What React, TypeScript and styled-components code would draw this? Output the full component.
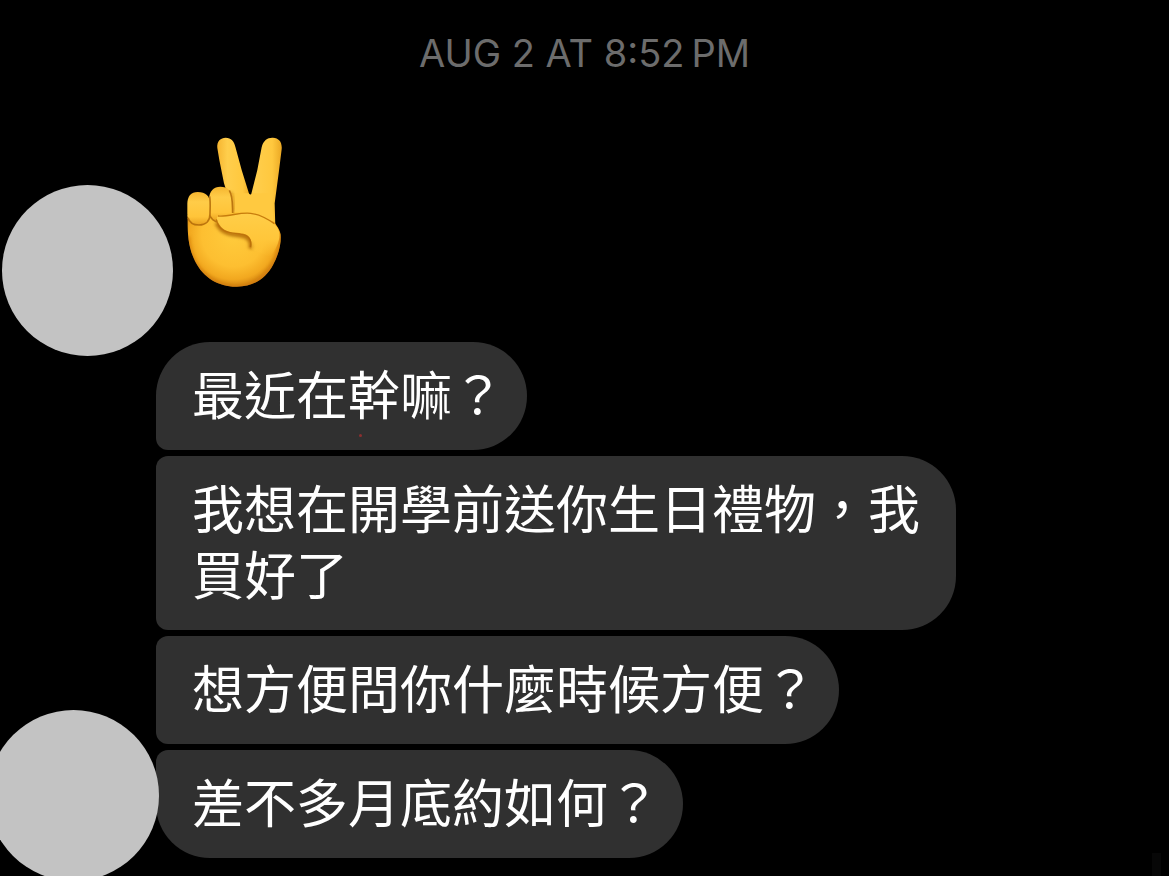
import React from "react";
import styled, { createGlobalStyle } from "styled-components";

const GlobalStyle = createGlobalStyle`
  html, body, #root { height: 100%; }
  body { margin: 0; background: #000; overflow: hidden; }
  * { box-sizing: border-box; }
`;

const Thread = styled.main`
  position: relative;
  min-height: 100%;
  overflow: hidden;
  background: #000;
  color: #fff;
  font-family: Inter, "Noto Sans CJK TC", sans-serif;
`;

const Timestamp = styled.time`
  display: block;
  padding-top: 29px;
  text-align: center;
  font-size: 38px;
  line-height: 48px;
  color: #6c6c6c;
`;

const Messages = styled.ol`
  display: flex;
  flex-direction: column;
  gap: 6px;
  margin: 0;
  padding: 59px 0 18px;
  list-style: none;
`;

const Message = styled.li`
  display: grid;
  grid-template-columns: 156px minmax(0, 1fr);
  align-items: end;
`;

const Avatar = styled.div<{ $shift: number; $drop: number }>`
  z-index: 1;
  grid-column: 1;
  width: 171px;
  height: 171px;
  margin: -80px 0 ${(p) => -p.$drop}px ${(p) => p.$shift}px;
  border-radius: 50%;
  background: #c3c3c3;
`;

const Emoji = styled.svg`
  grid-column: 2;
  width: 96px;
  height: 152px;
  margin: 0 0 48px 30px;
`;

const Bubble = styled.p<{ $first?: boolean; $last?: boolean }>`
  position: relative;
  grid-column: 2;
  justify-self: start;
  max-width: 800px;
  margin: 0;
  padding: 18px 23px 24px 36px;
  border-radius: ${(p) => (p.$first ? 54 : 12)}px 54px 54px ${(p) => (p.$last ? 54 : 12)}px;
  background: #303030;
  font-family: "Noto Sans CJK TC", sans-serif;
  font-size: 52px;
  line-height: 66px;
`;

const RedDot = styled.i`
  position: absolute;
  left: 203px;
  bottom: 13px;
  width: 3px;
  height: 3px;
  border-radius: 50%;
  background: #8c3030;
`;

const ScrollMark = styled.i`
  position: absolute;
  right: 8px;
  bottom: 0;
  width: 9px;
  height: 23px;
  background: #070707;
`;

function VictoryHand() {
  return (
    <Emoji viewBox="48 48 288 456" role="img" aria-label="victory hand">
      <defs>
        <linearGradient id="finger" x1="0" y1="0" x2="1" y2="0">
          <stop offset="0" stopColor="#f6b530" />
          <stop offset="0.3" stopColor="#ffce4c" />
          <stop offset="0.75" stopColor="#ffc83e" />
          <stop offset="1" stopColor="#eba824" />
        </linearGradient>
        <radialGradient id="palm" gradientUnits="userSpaceOnUse" cx="190" cy="345" r="158">
          <stop offset="0" stopColor="#ffcb3c" />
          <stop offset="0.6" stopColor="#fdbf31" />
          <stop offset="0.84" stopColor="#f2a81f" />
          <stop offset="1" stopColor="#d08010" />
        </radialGradient>
        <linearGradient id="curled" x1="0" y1="0" x2="0" y2="1">
          <stop offset="0" stopColor="#f5b52f" />
          <stop offset="0.3" stopColor="#ffcc48" />
          <stop offset="0.75" stopColor="#ffc439" />
          <stop offset="1" stopColor="#e9a11e" />
        </linearGradient>
        <linearGradient id="thumb" x1="0" y1="0" x2="0" y2="1">
          <stop offset="0" stopColor="#ffce48" />
          <stop offset="0.6" stopColor="#ffc63a" />
          <stop offset="1" stopColor="#ffc235" stopOpacity="0" />
        </linearGradient>
        <filter id="soft" x="-20%" y="-20%" width="140%" height="140%">
          <feGaussianBlur stdDeviation="5" />
        </filter>
        <clipPath id="hand">
          <path d="M53 285C52 340 54 382 76 425C100 472 145 500 198 500C252 501 288 474 309 435C328 400 334 365 332 343C330 330 321 318 314 300L300 260L130 260Z" />
        </clipPath>
      </defs>
      <path fill="url(#finger)" d="M142 84C140 63 152 53 167 53C184 53 192 64 196 80L215 150L243 240L230 310H188L178 240L162 190L148 120Z" />
      <path fill="url(#finger)" d="M275 82C280 61 293 52 309 53C327 54 337 66 335 88L326 160L314 250L316 320L220 300L243 225L262 150Z" />
      <path fill="#ffc940" d="M180 220L236 220Q242 227 248 220L300 220L312 310H175Z" />
      <path fill="url(#palm)" d="M53 285C52 340 54 382 76 425C100 472 145 500 198 500C252 501 288 474 309 435C328 400 334 365 332 343C330 330 321 318 312 305L240 280L185 275Z" />
      <g clipPath="url(#hand)">
        <path d="M54 350C58 450 130 500 198 502C270 502 330 430 333 350" fill="none" stroke="#d07a08" strokeWidth="14" opacity="0.6" filter="url(#soft)" />
        <path d="M140 308C155 342 188 344 214 346C235 348 247 362 242 386" fill="none" stroke="#a65c00" strokeWidth="14" opacity="0.75" filter="url(#soft)" />
      </g>
      <path d="M182 216C192 238 190 256 191 278" fill="none" stroke="#c17608" strokeWidth="8" opacity="0.6" filter="url(#soft)" />
      <path fill="url(#curled)" d="M117 239C117 212 132 200 151 200C173 200 187 213 187 239V282L145 304C126 300 117 290 117 273Z" />
      <path fill="url(#curled)" d="M52 252C52 229 63 216 83 216C107 216 120 228 120 251V280C120 303 107 315 87 315C64 315 52 303 52 280Z" />
      <path fill="none" stroke="#b26a08" strokeWidth="5" opacity="0.85" d="M119 229C122 249 120 267 120 282C120 303 107 315 87 315C70 315 58 307 54 293M178 211C189 230 187 252 188 279M120 288C125 298 132 303 140 306" />
      <path fill="url(#thumb)" d="M143 304C136 291 145 284 160 285C190 287 211 277 242 280C272 283 301 299 319 319C338 341 326 380 300 410L244 388C249 361 239 345 218 342C193 338 159 341 143 304Z" />
      <path fill="none" stroke="#c77c0c" strokeWidth="4" d="M144 288C180 290 209 276 242 280C270 283 293 297 313 311" />
      <path fill="none" stroke="#ba6d08" strokeWidth="4" opacity="0.8" d="M139 298C148 341 184 338 212 342C235 344 246 359 241 381" />
    </Emoji>
  );
}

export default function App() {
  return (
    <>
      <GlobalStyle />
      <Thread lang="zh-Hant">
        <Timestamp>AUG 2 AT 8:52{"\u202F"}PM</Timestamp>
        <Messages>
          <Message>
            <Avatar $shift={2} $drop={20} />
            <VictoryHand />
          </Message>
          <Message>
            <Bubble $first>
              最近在幹嘛？
              <RedDot />
            </Bubble>
          </Message>
          <Message>
            <Bubble>我想在開學前送你生日禮物，我買好了</Bubble>
          </Message>
          <Message>
            <Bubble>想方便問你什麼時候方便？</Bubble>
          </Message>
          <Message>
            <Avatar $shift={-12} $drop={23} />
            <Bubble $last>差不多月底約如何？</Bubble>
          </Message>
        </Messages>
        <ScrollMark />
      </Thread>
    </>
  );
}
